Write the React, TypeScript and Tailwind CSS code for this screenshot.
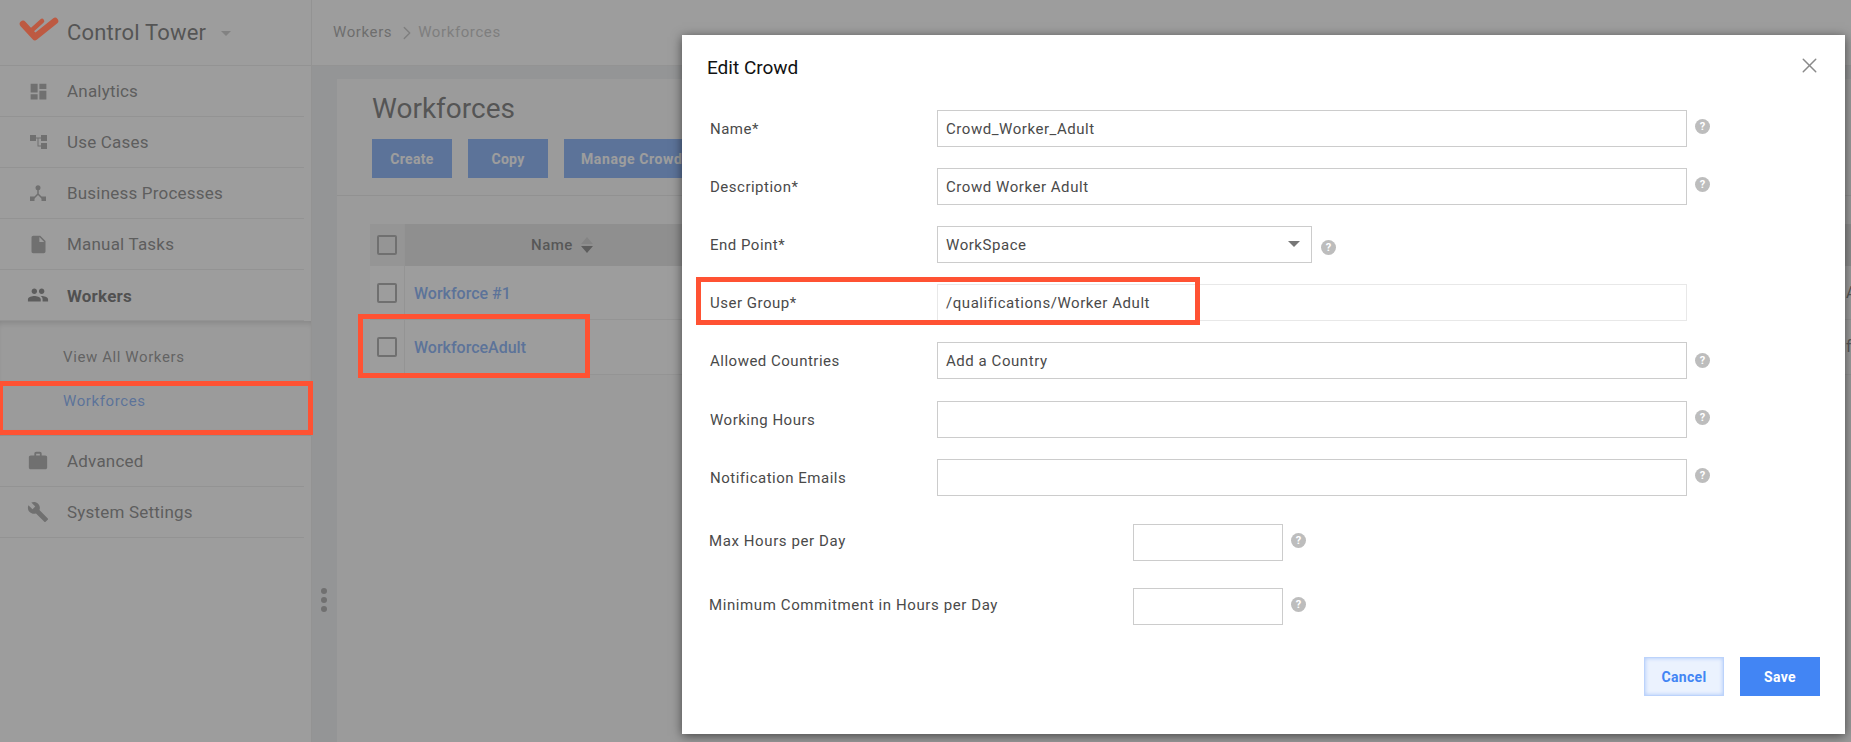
import { MdBuild, MdDashboard, MdInsertDriveFile, MdPeople, MdWork } from 'react-icons/md';
import { ChevronRight, X } from 'lucide-react';
import type { ReactNode } from 'react';

function UseCasesIcon() {
  return (
    <svg viewBox="0 0 17 14" className="h-[14px] w-[17px]" fill="currentColor">
      <rect x="0" y="0" width="6" height="6" />
      <rect x="11" y="0" width="6" height="6" />
      <rect x="11" y="8" width="6" height="6" />
      <path d="M6 2.500h5v1H8.500v7H11v1H7.500v-8H6z" />
    </svg>
  );
}

function HubIcon() {
  return (
    <svg viewBox="0 0 16 16" className="h-4 w-4" fill="currentColor">
      <circle cx="8" cy="2.800" r="2.500" />
      <path d="M8 3v6M8 9l-5 5M8 9l5 5" stroke="currentColor" strokeWidth="1.500" fill="none" />
      <rect x="0" y="11.500" width="4.500" height="4.500" />
      <rect x="11.500" y="11.500" width="4.500" height="4.500" />
    </svg>
  );
}

const navItems = [
  { label: 'Analytics', icon: <MdDashboard className="h-[21px] w-[21px]" /> },
  { label: 'Use Cases', icon: <UseCasesIcon /> },
  { label: 'Business Processes', icon: <HubIcon /> },
  { label: 'Manual Tasks', icon: <MdInsertDriveFile className="h-[21px] w-[21px]" /> },
];

function LogoMark() {
  return (
    <svg
      viewBox="0 0 42 27"
      className="relative z-20 -mt-[8px] h-[27px] w-[42px] shrink-0"
      fill="none"
      stroke="#bd5a42"
      strokeWidth="6.500"
      strokeLinecap="round"
      strokeLinejoin="round"
    >
      <path d="M5 9 17 22 37 6" />
      <path d="M14 15 24 6" strokeWidth="4.500" />
    </svg>
  );
}

function HelpIcon() {
  return (
    <span className="flex h-[15px] w-[15px] items-center justify-center rounded-full bg-[#bdbdbd] text-[11px] leading-none font-bold text-white">
      ?
    </span>
  );
}

function Checkbox() {
  return <span className="h-5 w-5 rounded-[2px] border-2 border-[#7b7b7b]" />;
}

function NavRow({ label, icon, bold = false }: { label: string; icon: ReactNode; bold?: boolean }) {
  return (
    <div className="mr-[7px] flex h-[51px] shrink-0 items-center border-b border-[#e0e0e0]">
      <span className={bold ? 'flex w-[67px] justify-center pl-[9px] text-[#444]' : 'flex w-[67px] justify-center pl-[9px] text-[#7b7b7b]'}>
        {icon}
      </span>
      <span
        className={
          bold
            ? 'pt-[3px] text-[17px] tracking-[0.2px] font-bold text-[#222]'
            : 'pt-[2px] text-[17px] tracking-[0.2px] text-[#464646]'
        }
      >
        {label}
      </span>
    </div>
  );
}

function Field({
  label,
  value,
  hint = 'raised',
  faint = false,
  className = '',
}: {
  label: string;
  value?: string;
  hint?: 'raised' | 'level' | 'none';
  faint?: boolean;
  className?: string;
}) {
  return (
    <div className={`flex h-[37px] items-center ${className}`}>
      <span className="w-[227px] pt-[2px] text-[15px] tracking-[0.5px] text-[#4a4a4a]">{label}</span>
      <div
        className={
          faint
            ? 'flex h-[37px] w-[750px] items-center border border-[#e8e8e8] px-2 pt-[2px] text-[15px] tracking-[0.55px] text-[#4a4a4a]'
            : 'flex h-[37px] w-[750px] items-center border border-[#cccccc] px-2 pt-[2px] text-[15px] tracking-[0.55px] text-[#4a4a4a]'
        }
      >
        {value}
      </div>
      {hint === 'raised' && (
        <span className="mb-[5px] ml-[8px]">
          <HelpIcon />
        </span>
      )}
      {hint === 'level' && (
        <span className="ml-[8px]">
          <HelpIcon />
        </span>
      )}
    </div>
  );
}

function ShortField({ label }: { label: string }) {
  return (
    <div className="flex h-[37px] items-center">
      <span className="w-[424px] pb-[2px] text-[15px] tracking-[0.6px] text-[#4a4a4a]">{label}</span>
      <div className="h-[37px] w-[150px] border border-[#cccccc]" />
      <span className="mb-[5px] ml-[8px]">
        <HelpIcon />
      </span>
    </div>
  );
}

function TableRow({ name, extra, height }: { name: string; extra: string; height: string }) {
  return (
    <div className={`flex items-center border-b border-[#e4e4e4] bg-white text-[16px] font-medium text-[#4285f4] ${height}`}>
      <span className="flex h-full w-[35px] shrink-0 items-center justify-center border-r border-[#e4e4e4]">
        <Checkbox />
      </span>
      <span className="ml-[9px] w-[1432px] shrink-0 pt-[2px]">{name}</span>
      <span className="font-normal text-[#333]">{extra}</span>
    </div>
  );
}

export default function App() {
  return (
    <div className="relative flex h-[742px] w-[1851px] overflow-hidden bg-[#e4e6ea] font-['Roboto',sans-serif]">
      {/* page behind the dialog */}
      <aside className="flex w-[312px] shrink-0 flex-col border-r border-[#e0e0e0] bg-white">
        <div className="flex h-[66px] shrink-0 items-center border-b border-[#e0e0e0] pl-[18px]">
          <LogoMark />
          <span className="ml-[7px] text-[22px] tracking-[0.2px] text-[#2c2c2c]">Control Tower</span>
          <span className="mt-[2px] ml-[15px] h-0 w-0 border-x-[5px] border-t-[5px] border-x-transparent border-t-[#b0b0b0]" />
        </div>
        {navItems.map((item) => (
          <NavRow key={item.label} label={item.label} icon={item.icon} />
        ))}
        <NavRow label="Workers" icon={<MdPeople className="h-[22px] w-[22px]" />} bold />
        <div className="h-[115px] shrink-0 bg-[#fafafa] pt-[26px] pl-[63px] text-[15px] leading-[20px] tracking-[0.6px] shadow-[inset_0_6px_6px_-4px_rgba(0,0,0,0.25),inset_0_-6px_6px_-4px_rgba(0,0,0,0.2)]">
          <div className="text-[#555]">View All Workers</div>
          <div className="mt-[24px] text-[#4285f4]">Workforces</div>
        </div>
        <NavRow label="Advanced" icon={<MdWork className="h-[22px] w-[22px]" />} />
        <NavRow label="System Settings" icon={<MdBuild className="h-[22px] w-[22px]" />} />
      </aside>

      <main className="flex min-w-0 flex-1 flex-col">
        <div className="flex h-[66px] shrink-0 items-center border-b border-[#e0e0e0] bg-white pl-[21px] text-[15px] tracking-[0.6px]">
          <span className="text-[#757575]">Workers</span>
          <ChevronRight className="ml-1 h-[22px] w-[22px] text-[#a5a5a5]" strokeWidth={1.5} />
          <span className="text-[#a5a5a5]">Workforces</span>
        </div>
        <div className="flex-1 pt-[13px] pl-[25px]">
          <div className="h-full bg-[#fafafa]">
            <div className="h-[117px] border-b border-[#dcdcdc] pt-[12px] pl-[35px]">
              <h1 className="text-[28px] leading-[36px] text-[#2c2c2c]">Workforces</h1>
              <div className="mt-[12px] flex gap-[16px] text-[14px] font-bold tracking-[0.3px] text-white">
                <span className="flex h-[39px] w-[80px] items-center justify-center bg-[#4285f4] pt-[2px]">Create</span>
                <span className="flex h-[39px] w-[80px] items-center justify-center bg-[#4285f4] pt-[2px]">Copy</span>
                <span className="flex h-[39px] w-[150px] items-center bg-[#4285f4] pt-[2px] pl-[17px] tracking-[0.6px]">Manage Crowds</span>
              </div>
            </div>
            <div className="pt-[28px] pl-[33px]">
              <div className="flex h-[42px] items-center bg-[#d7d7d7] text-[15px] font-medium tracking-[0.5px] text-[#333]">
                <span className="flex h-full w-[35px] items-center justify-center border-r border-[#e4e4e4] bg-[#e8e8e8]">
                  <Checkbox />
                </span>
                <span className="ml-[126px]">Name</span>
                <span className="ml-[8px] flex flex-col gap-[2px]">
                  <span className="h-0 w-0 border-x-[6px] border-b-[7px] border-x-transparent border-b-[#b5b5b5]" />
                  <span className="h-0 w-0 border-x-[6px] border-t-[7px] border-x-transparent border-t-[#444]" />
                </span>
              </div>
              <TableRow name="Workforce #1" extra="Any" height="h-[54px]" />
              <TableRow name="WorkforceAdult" extra="false" height="h-[55px]" />
            </div>
          </div>
        </div>
      </main>

      <div className="absolute top-[588px] left-[321px] flex flex-col gap-[3px]">
        <span className="h-[6px] w-[6px] rounded-full bg-[#7b7b7b]" />
        <span className="h-[6px] w-[6px] rounded-full bg-[#7b7b7b]" />
        <span className="h-[6px] w-[6px] rounded-full bg-[#7b7b7b]" />
      </div>

      {/* dim layer */}
      <div className="absolute inset-0 z-10 bg-[#6a6a6a]/66" />

      {/* dialog */}
      <div className="absolute top-[35px] left-[682px] z-20 h-[699px] w-[1163px] bg-white shadow-[0_2px_10px_rgba(0,0,0,0.55)]">
        <div className="flex h-[75px] items-start justify-between pt-[22px] pr-[23px] pl-[25px]">
          <h2 className="text-[19px] leading-[22px] text-[#111]">Edit Crowd</h2>
          <X className="-mt-[4px] h-[25px] w-[25px] text-[#8a8a8a]" strokeWidth={1.4} />
        </div>
        <div className="flex flex-col gap-[21px] pl-[28px]">
          <Field label="Name*" value="Crowd_Worker_Adult" />
          <Field label="Description*" value="Crowd Worker Adult" />
          <div className="flex h-[37px] items-center">
            <span className="w-[227px] pt-[2px] text-[15px] tracking-[0.5px] text-[#4a4a4a]">End Point*</span>
            <div className="flex h-[37px] w-[375px] items-center justify-between border border-[#cccccc] px-2 text-[15px] tracking-[0.55px] text-[#4a4a4a]">
              <span className="pt-[2px]">WorkSpace</span>
              <span className="mr-[3px] mb-[2px] h-0 w-0 border-x-[6px] border-t-[6px] border-x-transparent border-t-[#777]" />
            </div>
            <span className="mt-[5px] ml-[9px]">
              <HelpIcon />
            </span>
          </div>
          <Field label="User Group*" value="/qualifications/Worker Adult" hint="none" faint />
          <Field label="Allowed Countries" value="Add a Country" hint="level" />
          <Field label="Working Hours" className="mt-[1px]" />
          <Field label="Notification Emails" />
        </div>
        <div className="mt-[28px] flex flex-col gap-[27px] pl-[27px]">
          <ShortField label="Max Hours per Day" />
          <ShortField label="Minimum Commitment in Hours per Day" />
        </div>
        <div className="absolute right-[25px] bottom-[38px] flex gap-[16px] text-[14px] font-bold tracking-[0.3px]">
          <span className="flex h-[39px] w-[80px] items-center justify-center border border-[#bcd3fb] bg-[#ebf2fe] pt-[2px] text-[#4285f4] shadow-[inset_0_0_4px_#a9c6fa]">
            Cancel
          </span>
          <span className="flex h-[39px] w-[80px] items-center justify-center bg-[#4285f4] pt-[2px] text-white">Save</span>
        </div>
      </div>

      {/* annotation boxes */}
      <div className="absolute top-[381px] left-[-2px] z-30 h-[54px] w-[315px] border-[5px] border-[#ff5233]" />
      <div className="absolute top-[314px] left-[358px] z-30 h-[64px] w-[232px] border-[5px] border-[#ff5233]" />
      <div className="absolute top-[277px] left-[696px] z-30 h-[48px] w-[504px] border-[5px] border-[#ff5233]" />
    </div>
  );
}
